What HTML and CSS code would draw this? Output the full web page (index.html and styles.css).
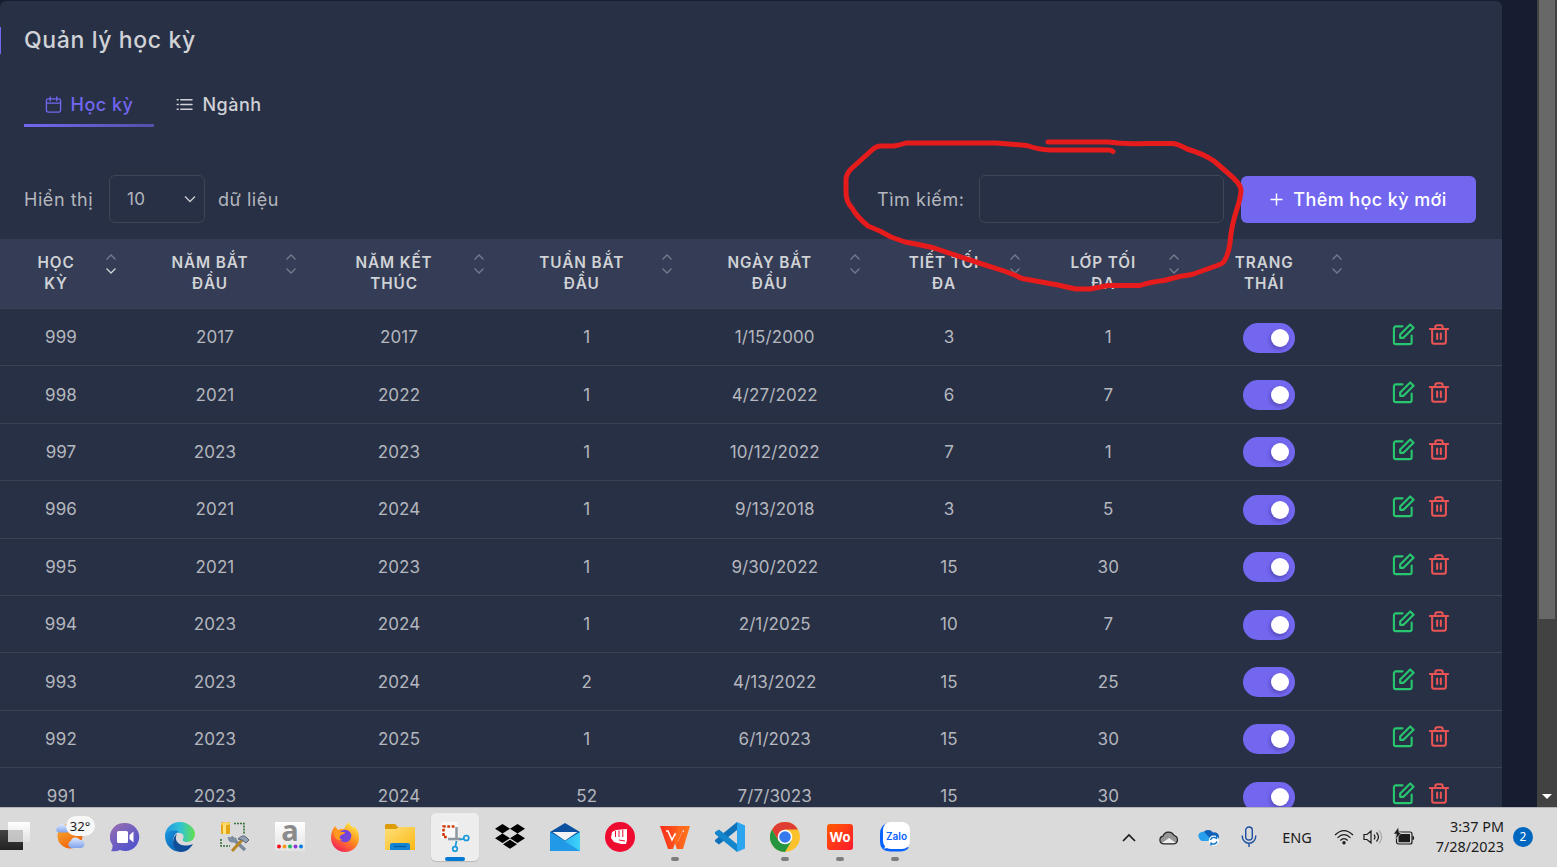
FILE: index.html
```html
<!DOCTYPE html>
<html lang="vi">
<head>
<meta charset="utf-8">
<title>Quản lý học kỳ</title>
<link rel="stylesheet" href="styles.css">
</head>
<body>
<svg class="defs" width="0" height="0" aria-hidden="true">
  <defs>
    <symbol id="edit" viewBox="0 0 24 24"><path d="M11 3.500H4a2 2 0 0 0-2 2V20a2 2 0 0 0 2 2h14.500a2 2 0 0 0 2-2v-7M19 1.500l3.500 3.500L12 15.500H8.500V12z"/></symbol>
    <symbol id="trash" viewBox="0 0 24 24"><path d="M2 6h20M19.500 6v14a2 2 0 0 1-2 2h-11a2 2 0 0 1-2-2V6M8 6V4a2 2 0 0 1 2-2h4a2 2 0 0 1 2 2v2M10 11v6M14 11v6"/></symbol>
    <symbol id="cloud" viewBox="0 0 30 20"><path d="M7 19a6 6 0 0 1-1-11.500A9 9 0 0 1 22 6a6.500 6.500 0 0 1 1 13z"/></symbol>
    <linearGradient id="gWhite" x2="0" y2="1"><stop stop-color="#fff"/><stop offset="1" stop-color="#e2e2e2"/></linearGradient>
    <linearGradient id="gDark" x2="0" y2="1"><stop stop-color="#444"/><stop offset="1" stop-color="#222"/></linearGradient>
    <linearGradient id="gSun" x2=".6" y2="1"><stop stop-color="#f9b233"/><stop offset="1" stop-color="#f0610c"/></linearGradient>
    <linearGradient id="gCloud" x2="0" y2="1"><stop stop-color="#dfe9fd"/><stop offset="1" stop-color="#7fa3ec"/></linearGradient>
    <linearGradient id="gChat" x2=".7" y2="1"><stop stop-color="#9b6fb0"/><stop offset="1" stop-color="#4f52cd"/></linearGradient>
    <linearGradient id="gEdgeTop"><stop stop-color="#2396dc"/><stop offset=".5" stop-color="#2fc2d8"/><stop offset="1" stop-color="#63e04c"/></linearGradient>
    <linearGradient id="gEdge" x2="1" y2="1"><stop stop-color="#1795e0"/><stop offset="1" stop-color="#0d55a8"/></linearGradient>
    <linearGradient id="gFire" x1=".8" x2=".2" y2="1"><stop stop-color="#fff04a"/><stop offset=".5" stop-color="#ff8a1e"/><stop offset="1" stop-color="#f4155e"/></linearGradient>
    <linearGradient id="gFolder" x2="1" y2="1"><stop stop-color="#ffe07a"/><stop offset="1" stop-color="#fbb915"/></linearGradient>
    <linearGradient id="gMail" x2="1"><stop stop-color="#1c9be8"/><stop offset="1" stop-color="#3ed2fa"/></linearGradient>
    <linearGradient id="gWps" x2="1"><stop stop-color="#f92c1c"/><stop offset="1" stop-color="#ff7a1c"/></linearGradient>
    <linearGradient id="gWo" x2="1" y2="1"><stop stop-color="#ff5a00"/><stop offset="1" stop-color="#ff1830"/></linearGradient>
  </defs>
</svg>

<div class="screen">
  <main class="page">
    <section class="card">
      <h1 class="title"><span>Quản lý học kỳ</span></h1>
      <nav class="tabs">
        <a class="tab tab-active">
          <svg class="tab-icon" viewBox="0 0 18 18"><rect x="1.500" y="3" width="15" height="14" rx="1.800"/><path d="M1.500 7.500h15M5.500 1v4M12.500 1v4"/></svg>
          <span>Học kỳ</span>
        </a>
        <a class="tab">
          <svg class="tab-icon" viewBox="0 0 18 18"><path d="M5 4h12M5 9h12M5 14h12M1.200 4h1.200M1.200 9h1.200M1.200 14h1.200"/></svg>
          <span>Ngành</span>
        </a>
      </nav>
      <div class="toolbar">
        <span class="t-show">Hiển thị</span>
        <div class="select"><span>10</span><svg width="12" height="8" viewBox="0 0 12 8"><path d="M1 1.500l5 5 5-5"/></svg></div>
        <span class="t-data">dữ liệu</span>
        <span class="t-search">Tìm kiếm:</span>
        <input class="search" type="text">
        <button class="add"><svg width="13" height="13" viewBox="0 0 13 13"><path d="M6.500 0.500v12M.5 6.500h12"/></svg><span>Thêm học kỳ mới</span></button>
      </div>
      <div class="table">
        <div class="row head" id="head"></div>
        <div id="rows"></div>
      </div>
    </section>
    <div class="scrollbar"><div class="thumb"></div><div class="arrow"></div></div>
  </main>

  <footer class="taskbar">
    <div class="apps">
      <div class="app"><svg viewBox="0 0 30 30"><rect x="0" y="8" width="23" height="20" fill="url(#gDark)"/><rect x="8" y="0" width="22" height="20" fill="url(#gWhite)"/><path d="M8 8h15v12H8z" fill="#aaa" opacity=".6"/></svg></div>
      <div class="app"><svg viewBox="0 0 30 30"><circle cx="15" cy="14" r="12.500" fill="url(#gSun)"/><use href="#cloud" x="0" y="0" width="15" height="12" fill="url(#gCloud)"/><use href="#cloud" x="12" y="14" width="18" height="13" fill="url(#gCloud)"/></svg><span class="temp">32°</span></div>
      <div class="app"><svg viewBox="0 0 30 30"><path d="M15 1a14 14 0 1 1-5 27q-4 2-9 1 2-3 1.500-6A14 14 0 0 1 15 1z" fill="url(#gChat)"/><rect x="7" y="9" width="11" height="12" rx="1.500" fill="#fff"/><path d="M19.500 13l4-3.500v11l-4-3.500z" fill="#fff"/></svg></div>
      <div class="app"><svg viewBox="0 0 30 30"><path d="M0 14C0 6 7 0 15 0s15 6 15 12c0 5-4 8-8 8-3 0-5-1-4-3 2-4-1-6-4-6C8 9 2 10 0 14z" fill="url(#gEdgeTop)"/><path d="M0 14c1-5 9-7 14-4-5 1-8 9-3 15 2 2 5 3 7 4.700C8 31 0 24 0 14z" fill="url(#gEdge)"/><path d="M12 12c-4 7 3 15 16 10-3 5-7 8-12 8C6 28 7 15 12 12z" fill="#104e99"/></svg></div>
      <div class="app"><svg viewBox="0 0 30 30"><path d="M14 1.500h10v10M1 17v7h9" fill="none" stroke="#36703a" stroke-width="1.600" stroke-dasharray="2 1"/><rect x="1" y="0" width="9" height="12" rx="1" fill="#e5a616"/><rect x="3" y="2" width="3" height="10" fill="#ffe27a"/><ellipse cx="5.500" cy="1.500" rx="4.500" ry="1.500" fill="#f8d56a"/><path d="M11 15l14 13" stroke="#78899e" stroke-width="3.500"/><path d="M23 17L12 29" stroke="#b88524" stroke-width="3"/><path d="M18 17q5-5 8-2l3 3-3 3-4-3z" fill="#91a0b3" stroke="#576679"/><path d="M9 15q0 5 5 4l2-3" fill="none" stroke="#7e8fa4" stroke-width="2.500"/></svg></div>
      <div class="app"><svg class="open" viewBox="0 0 30 30"><path fill="url(#gWhite)" d="M0 0h30v29H0z"/><text class="letter-a" x="15" y="19" text-anchor="middle">a</text><circle cx="4" cy="24.500" r="2" fill="#f20f19"/><circle cx="9.500" cy="24.500" r="2" fill="#f59a16"/><circle cx="15" cy="24.500" r="2" fill="#20b568"/><circle cx="20.500" cy="24.500" r="2" fill="#9036d8"/><circle cx="26" cy="24.500" r="2" fill="#087fe0"/></svg></div>
      <div class="app"><svg viewBox="0 0 30 30"><path d="M5 4l3 4q3-2 6-1 1-4 5-7 1 4 5 6v-2q5 5 5 12a13.700 13.700 0 0 1-28 0Q1 9 5 4z" fill="url(#gFire)"/><circle cx="15" cy="14" r="6.300" fill="#7545d9"/><path d="M3 9q5-2 7 1h5q0 2-4 3-3 3 1 5-5 1-7-3z" fill="#ff981f"/></svg></div>
      <div class="app"><svg viewBox="0 0 30 30"><path d="M0 3.500Q0 2 1.500 2H10l3 3h17v8H0z" fill="#dc9c08"/><path d="M0 7h11l3-2h16v23H0z" fill="url(#gFolder)"/><path d="M5 28v-5q0-2 2-2h16q2 0 2 2v5z" fill="#1383d4"/><path d="M9 24.500h12" stroke="#075aa0" stroke-width="1.200"/></svg></div>
      <div class="app app-active"><svg viewBox="0 0 30 30"><rect x="1" y="0" width="17" height="17" rx="2" fill="#f8f8f8"/><path d="M14.500 4.500H3.500V15H8" fill="none" stroke="#d33a0a" stroke-width="2.600" stroke-dasharray="2.800 1.600"/><path d="M16.500 5v13M8 17h13" stroke="#8d979f" stroke-width="2.500"/><g fill="none" stroke="#1399dc" stroke-width="1.700"><circle cx="26.300" cy="16" r="2.500"/><circle cx="15" cy="27" r="2.300"/><path d="M20 17.500l4-.7M16.500 19l-1 5"/></g></svg></div>
      <div class="app"><svg viewBox="0 0 30 30"><path d="M7.500 2l7.500 4.700-7.500 4.800L0 6.700zM22.500 2L30 6.700l-7.500 4.800L15 6.700zM7.500 11.500l7.500 4.700L7.500 21 0 16.200zM22.500 11.500l7.500 4.700-7.500 4.800-7.500-4.800zM15 17.800l7 4.500-7 4.500-7-4.500z"/></svg></div>
      <div class="app"><svg viewBox="0 0 30 30"><path d="M0 10L15 1l15 9v9H0z" fill="#0b519f"/><path d="M0 10l15 9 15-9v19H0z" fill="url(#gMail)"/><path d="M0 10v19h30z" fill="#2299e6"/><path d="M2.500 10h25L15 18.500z" fill="#f1f2f3"/></svg></div>
      <div class="app"><svg viewBox="0 0 30 30"><circle cx="15" cy="15" r="15" fill="#ef0a30"/><path d="M7 10l4-2 11-1v11l-1 4h-5l-7-2-3-4z" fill="#fff"/><path d="M10.500 9v6M14 8.500V15M17.800 8v7M14 18l6 1" stroke="#ef0a30" stroke-width="1"/></svg><i class="dot"></i></div>
      <div class="app"><svg viewBox="0 0 30 30"><path d="M0 4h30l-7 23h-6l-2-6-2 6H8z" fill="url(#gWps)"/><path d="M6 9h2l4 9 3-6 3 6 4-9h2" fill="none" stroke="#fff" stroke-width="1.600"/><path d="M19 4h6l-9 20-2-7z" fill="#ff6a1f"/></svg><i class="dot show"></i></div>
      <div class="app"><svg viewBox="0 0 30 30"><path d="M22 0v8L4 22.500 0 19.500V18z" fill="#0c71b8"/><path d="M4 7.500L22 22v8L0 12v-2z" fill="#1486cb"/><path d="M22 0l8 3.500v23L22 30z" fill="#2ba5f0"/></svg></div>
      <div class="app"><svg viewBox="0 0 30 30"><circle cx="15" cy="15" r="15" fill="#fbc22d"/><path d="M2 7.500A15 15 0 0 1 28 7.500H15L8.500 18.800z" fill="#df3d33"/><path d="M2 7.500A15 15 0 0 0 15 30l6.500-11.300H8.500z" fill="#25963f"/><circle cx="15" cy="15" r="7.300" fill="#fff"/><circle cx="15" cy="15" r="5.800" fill="#3579ed"/></svg><i class="dot show"></i></div>
      <div class="app"><svg viewBox="0 0 30 30"><rect x="2" y="2" width="26" height="26" rx="3" fill="url(#gWo)"/><text class="letter-wo" x="15" y="20" text-anchor="middle">Wo</text></svg><i class="dot show"></i></div>
      <div class="app"><svg viewBox="0 0 30 30"><path d="M9 1Q0 2 0 12v8q0 9 10 9.500h10q6 0 9-4L9 22z" fill="#0862ff"/><rect x="3" y="0" width="27" height="27" rx="8" fill="#fff"/><path d="M5 22q1 3-1.500 4.500Q8 27 10 24z" fill="#fff"/><text class="letter-zalo" x="16.500" y="17.500" text-anchor="middle">Zalo</text></svg><i class="dot show"></i></div>
    </div>
    <div class="tray">
      <div class="slot w40"><svg width="14" height="9" viewBox="0 0 14 9"><path class="ln" d="M1 8l6-6 6 6"/></svg></div>
      <div class="slot w40"><svg width="20" height="15" viewBox="0 0 20 15"><path d="M4.500 13.800a3.900 3.900 0 0 1-.5-7.700A6 6 0 0 1 15 5.500a4.300 4.300 0 0 1 .5 8.300z" fill="#969696"/><path d="M3 13l7-5 7 5-2 .8H5z" fill="#eee"/><path d="M4.500 13.800a3.900 3.900 0 0 1-.5-7.700A6 6 0 0 1 15 5.500a4.300 4.300 0 0 1 .5 8.300z" fill="none" stroke="#222" stroke-width="1.200"/></svg></div>
      <div class="slot w40"><svg width="20" height="18" viewBox="0 0 20 18"><path d="M4 13a4 4 0 0 1-.5-7A6 6 0 0 1 14 4.500 4.500 4.500 0 0 1 17 13z" fill="#0d60b9"/><path d="M0 10a4 4 0 0 1 7-4l7 7H4q-3 0-4-3z" fill="#26a0ec"/><circle cx="14.800" cy="12.700" r="5.100" fill="#fff"/><path d="M11.500 12q1-3 4-2.500l2 1V8M18 13.500q-1 3-4 2.500l-2-1v2.500" fill="none" stroke="#0672c7" stroke-width="1.300"/></svg></div>
      <div class="slot w40"><svg width="16" height="22" viewBox="0 0 16 22"><rect x="4.700" y="1" width="6.600" height="13" rx="3.300" fill="none" stroke="#1c4e9f" stroke-width="1.400"/><path d="M1.300 9.500v1a6.700 6.700 0 0 0 13.400 0v-1M8 17v4" fill="none" stroke="#1c4e9f" stroke-width="1.400"/></svg></div>
      <div class="slot w56 eng">ENG</div>
      <div class="slot w38"><svg width="20" height="16" viewBox="0 0 20 16"><g class="ln thin"><path d="M1 6q9-9 18 0M3.500 8.800q6.500-6.500 13 0M6.300 11.500q3.700-3.700 7.400 0"/></g><circle cx="10" cy="13.800" r="1.700"/></svg></div>
      <div class="slot w20"><svg width="20" height="16" viewBox="0 0 20 16"><g class="ln thin"><path d="M1 5.500h3L8 2v12l-4-3.500H1zM11 5.500q2 2.500 0 5M13.500 3.500q4 4.500 0 9"/><path stroke="#aaa" d="M16 1.500q5.500 6.500 0 13"/></g></svg></div>
      <div class="slot w42"><svg width="21" height="18" viewBox="0 0 21 18"><rect x="2.500" y="4" width="15.500" height="12" rx="2" class="ln thin"/><path d="M4.500 7.500l2-1.500h9.500v8.300H4.500zM18.500 8h1q1.500 2 0 4h-1z"/><path d="M4.500-1L-.5 6h3l-1 5.500 6-7H5z" stroke="#dbdbdb" stroke-width=".6"/></svg></div>
      <div class="clock"><span class="time">3:37 PM</span><span class="date">7/28/2023</span></div>
      <div class="badge">2</div>
    </div>
  </footer>

  <svg class="scribble" viewBox="0 0 1557 867"><path d="M1048 142H1108Q1125 144.500 1145 143.500H1173Q1178 144 1187 149 1204 154 1214 161L1229 174Q1241 184 1241 190 1241 197 1236 212 1231 228 1230 243 1227 262 1220 264.500L1192 274.500Q1178 276 1164 280.500 1150 282 1140 285.500H1108L1090 289H1076Q1066 287 1058 285L1022 278.500Q1013 274 1004 271L979 263 934 248Q922 245 905 242L891 237Q879 230 868 226 857 217 852 208 846 202 846 192V180Q846 174 851 169L862 159 872 150Q876 146 881 146H894Q900 145 906 143H996L1027 145.500Q1040 150 1050 150H1107Q1111 149.500 1113 151.500"/></svg>
</div>
<script src="table.js"></script>
</body>
</html>
```
FILE: styles.css
```css
* { box-sizing: border-box; }
body { margin: 0; background: #161d31; font-family: Inter, "Noto Sans", sans-serif; overflow: hidden; }
.defs { position: absolute; }
.screen { position: relative; width: 1557px; height: 867px; display: flex; flex-direction: column; overflow: hidden; }

.page { height: 807px; display: flex; justify-content: space-between; padding-top: 1px; overflow: hidden; background: #161d31; }
.card { width: 1502px; height: 830px; background: #283046; border-radius: 6px 6px 0 0; color: #b4b7bd; font-size: 17px; flex: none; }
.title { margin: 26px 0 0; height: 27px; border-left: 1px solid #7367f0; padding-left: 23px; line-height: 26px; font-size: 23px; font-weight: 500; color: #d0d2d6; letter-spacing: .62px; }
.tabs { display: flex; margin: 30px 0 0 24px; height: 43px; }
.tab { display: flex; align-items: center; justify-content: center; gap: 9px; width: 130px; height: 43px; font-weight: 500; font-size: 18px; letter-spacing: .5px; color: #d0d2d6; padding-bottom: 3px; }
.tab-active { color: #7367f0; border-bottom: 3px solid; border-image: linear-gradient(90deg, #7367f0, #5450a8) 1; padding-bottom: 0; }
.tab-icon { width: 17px; height: 17px; fill: none; stroke: currentColor; stroke-width: 1.400; stroke-linecap: round; }

.toolbar { display: flex; align-items: center; height: 48px; margin-top: 48px; padding-left: 24px; font-size: 18px; letter-spacing: .55px; white-space: nowrap; }
.t-show { width: 85px; }
.select { width: 96px; height: 48px; border: 1px solid #404656; border-radius: 6px; display: flex; align-items: center; justify-content: space-between; padding: 0 8px 0 17px; font-size: 17px; letter-spacing: .3px; }
.select svg { fill: none; stroke: #c5c7cc; stroke-width: 1.500; }
.t-data { margin-left: 13px; width: 659px; }
.t-search { width: 102px; }
.search { width: 245px; height: 48px; background: transparent; border: 1px solid #404656; border-radius: 6px; padding: 0; }
.add { margin-left: 17px; width: 235px; height: 47px; border: 0; border-radius: 6px; background: #7367f0; color: #fff; font: 500 18px Inter, sans-serif; letter-spacing: .4px; display: flex; align-items: center; justify-content: center; gap: 10px; padding: 0; }
.add svg { fill: none; stroke: #fff; stroke-width: 1.400; }

.table { margin: 16px 0 0 -3px; width: 1505px; }
.row { display: grid; grid-template-columns: 128px 180px 188px 187.500px 188.500px 160px 158.500px 163.500px 151px; height: 57.400px; border-top: 1px solid #3b4253; align-items: center; text-align: center; letter-spacing: .1px; }
.head { height: 69px; background: #343d55; border-top: 0; color: #d0d2d6; font-size: 15.300px; font-weight: 600; line-height: 21px; letter-spacing: .9px; align-items: start; }
.th { display: flex; justify-content: flex-end; padding: 13px 8px 0 0; }
.th span { flex: 1; white-space: pre-line; }
.th .label { padding-left: 10px; }
.sort { width: 12px; height: 22px; margin-top: 1px; fill: none; stroke: #747b8c; stroke-width: 1.300; }
.sort .on { stroke: #d0d2d6; }
.cell { padding-bottom: 0; }
.switch { display: flex; width: 52px; height: 30px; border-radius: 15px; background: #7367f0; margin: 1px auto 0; padding: 6px 6px 0 28px; }
.switch i { width: 18px; height: 18px; border-radius: 50%; background: #fff; box-shadow: -1px 2px 4px rgba(20, 15, 70, .35); }
.actions { display: flex; gap: 13px; padding: 0 0 5px 40.500px; }
.actions svg { width: 23px; height: 23px; fill: none; stroke-width: 2.200; stroke-linejoin: round; stroke-linecap: round; }
.edit { stroke: #28c76f; }
.actions .trash { stroke: #ea5455; width: 22px; }

.scrollbar { width: 20px; height: 807px; margin-top: -1px; background: #424242; display: flex; flex-direction: column; align-items: center; justify-content: space-between; flex: none; }
.thumb { width: 16px; height: 619px; background: #686868; }
.arrow { border: 5px solid transparent; border-top-color: #fff; border-bottom: 0; margin-bottom: 8px; }

.taskbar { height: 60px; background: #dadada; border-top: 1px solid #b4b5b9; display: flex; justify-content: space-between; color: #1b1b1b; }
.apps { display: flex; margin-left: -12.500px; }
.app { position: relative; width: 55px; height: 58px; display: flex; align-items: center; justify-content: center; }
.app svg { width: 30px; height: 30px; position: relative; }
.app .open { overflow: visible; }
.app-active::before { content: ""; position: absolute; left: 3.500px; top: 5px; width: 48px; height: 48px; border-radius: 5px; background: #ededed; box-shadow: 0 1px 1px #bbb; }
.app-active::after { content: ""; position: absolute; left: 17.500px; bottom: 5px; width: 20px; height: 4px; border-radius: 2px; background: #0078d4; }
.dot { display: none; }
.show { display: block; position: absolute; left: 23.500px; bottom: 5px; width: 8px; height: 4px; border-radius: 2px; background: #7d7d7d; }
.temp { position: absolute; left: 23px; top: 8px; width: 29px; height: 20px; border-radius: 10px; background: #f7f7f7; font: 13px/20px "Noto Sans", sans-serif; text-align: center; }
.letter-a { font: 700 29px "Open Sans", sans-serif; fill: #8b8b8b; }
.letter-wo { font: 700 13px Inter, sans-serif; fill: #fff; }
.letter-zalo { font: 600 10px Inter, sans-serif; fill: #0862ff; }
.tray { display: flex; align-items: center; height: 58px; font-family: "Noto Sans", sans-serif; padding-right: 24px; }
.slot { display: flex; align-items: center; justify-content: center; }
.slot svg { fill: #1b1b1b; overflow: visible; }
.ln { fill: none; stroke: #1b1b1b; stroke-width: 1.700; }
.thin { stroke-width: 1.200; }
.w40 { width: 40px; }
.w56 { width: 56px; }
.w38 { width: 38px; }
.w20 { width: 20px; }
.w42 { width: 42px; }
.eng { font-size: 14.500px; }
.clock { width: 79px; display: flex; flex-direction: column; align-items: flex-end; font-size: 14.400px; line-height: 20px; white-space: nowrap; }
.badge { width: 20px; height: 20px; margin-left: 9px; border-radius: 50%; background: #0067c0; color: #fff; font-size: 12px; line-height: 20px; text-align: center; }
.scribble { position: absolute; left: 0; top: 0; width: 1557px; height: 867px; pointer-events: none; fill: none; stroke: #e61c1c; stroke-width: 5; stroke-linecap: round; stroke-linejoin: round; }
```
FILE: table.js
```js
const columns = ["HỌC\nKỲ", "NĂM BẮT\nĐẦU", "NĂM KẾT\nTHÚC", "TUẦN BẮT\nĐẦU", "NGÀY BẮT\nĐẦU", "TIẾT TỐI\nĐA", "LỚP TỐI\nĐA", "TRẠNG\nTHÁI"];
const rows = [
  [999, 2017, 2017, 1, "1/15/2000", 3, 1],
  [998, 2021, 2022, 1, "4/27/2022", 6, 7],
  [997, 2023, 2023, 1, "10/12/2022", 7, 1],
  [996, 2021, 2024, 1, "9/13/2018", 3, 5],
  [995, 2021, 2023, 1, "9/30/2022", 15, 30],
  [994, 2023, 2024, 1, "2/1/2025", 10, 7],
  [993, 2023, 2024, 2, "4/13/2022", 15, 25],
  [992, 2023, 2025, 1, "6/1/2023", 15, 30],
  [991, 2023, 2024, 52, "7/7/3023", 15, 30]
];
document.getElementById("head").innerHTML = columns.map((c, i) =>
  `<div class="th"><span class="label">${c}</span><svg class="sort" viewBox="0 0 12 22"><path d="M1.500 6.500L6 2l4.500 4.500"/><path class="${i ? "" : "on"}" d="M1.500 15.500L6 20l4.500-4.500"/></svg></div>`).join("");
document.getElementById("rows").innerHTML = rows.map(r =>
  `<div class="row">${r.map(v => `<div class="cell">${v}</div>`).join("")}<div><div class="switch"><i></i></div></div><div class="actions"><svg class="edit"><use href="#edit"/></svg><svg class="trash"><use href="#trash"/></svg></div></div>`).join("");
```
